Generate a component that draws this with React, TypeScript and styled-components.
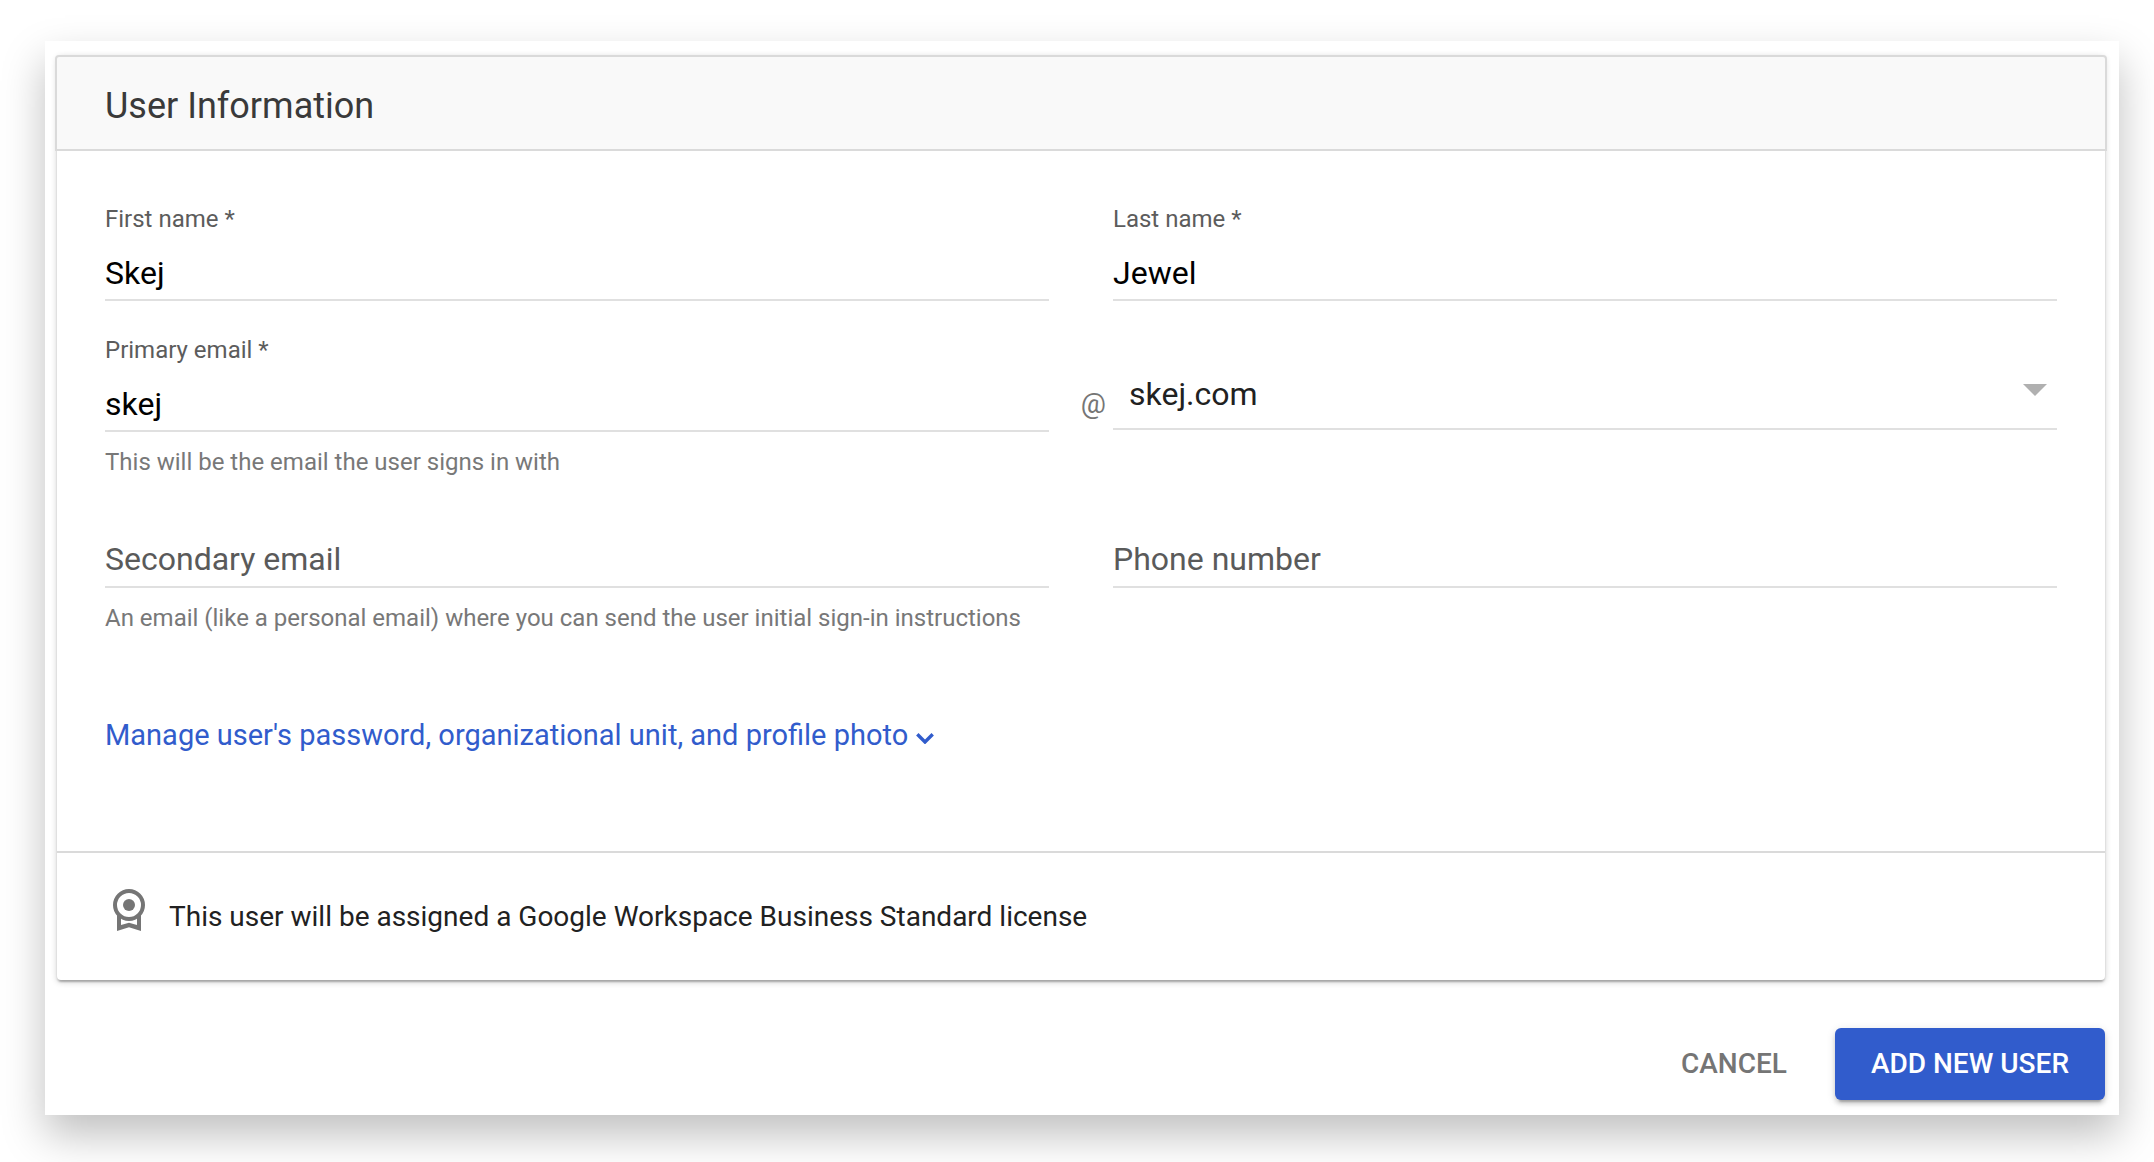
import React, { useState } from "react";
import styled, { createGlobalStyle } from "styled-components";

const GlobalStyle = createGlobalStyle`
  * { box-sizing: border-box; }
  body {
    margin: 0;
    background: #fff;
    font-family: Roboto, "Liberation Sans", sans-serif;
  }
  button, input, select { font-family: inherit; }
`;

const Page = styled.main`
  padding: 41px 35px 47px 45px;
`;

const Dialog = styled.form`
  padding: 16px 14px 15px 12px;
  background: #fff;
  box-shadow: 0 20px 40px rgba(0, 0, 0, 0.25);
`;

const Card = styled.section`
  border-radius: 4px;
  background: #fff;
  box-shadow:
    0 2px 2px rgba(0, 0, 0, 0.14),
    0 4px 2px -2px rgba(0, 0, 0, 0.12),
    0 2px 6px rgba(0, 0, 0, 0.2);
`;

const CardHeader = styled.header`
  margin: -2px -2px 0;
  padding: 29px 48px 23px;
  border: 2px solid #dadada;
  border-radius: 4px 4px 0 0;
  background: #f9f9f9;
`;

const Title = styled.h1`
  margin: 0;
  font-size: 36px;
  line-height: 40px;
  font-weight: 400;
  color: #3a3a3a;
`;

const CardBody = styled.div`
  padding: 54px 48px 100px;
`;

const Row = styled.div<{ $gap: number }>`
  display: grid;
  grid-template-columns: minmax(0, 1fr) 64px minmax(0, 1fr);
  margin-bottom: ${(p) => p.$gap}px;
`;

const Field = styled.div<{ $end?: boolean }>`
  grid-column: ${(p) => (p.$end ? 3 : 1)};
`;

const Label = styled.label`
  display: block;
  font-size: 24px;
  line-height: 28px;
  color: #5c5c5c;
`;

const Input = styled.input`
  display: block;
  width: 100%;
  height: 68px;
  padding: 20px 0 6px;
  border: 0;
  border-bottom: 2px solid #e0e0e0;
  border-radius: 0;
  outline: 0;
  background: transparent;
  font-size: 32px;
  line-height: 40px;
  color: #000;
`;

const Stack = styled.div`
  display: grid;
  > * { grid-area: 1 / 1; }
`;

const RestingLabel = styled.label`
  padding-top: 19px;
  font-size: 32px;
  line-height: 40px;
  color: #5a5a5a;
`;

const Hint = styled.p`
  margin: 16px 0 0;
  font-size: 24px;
  line-height: 28px;
  color: #787878;
`;

const AtSign = styled.span`
  justify-self: end;
  padding: 52px 7px 0 0;
  font-size: 28px;
  line-height: 32px;
  color: #757575;
`;

const DomainField = styled(Stack)`
  grid-column: 3;
  align-self: start;
  align-items: start;
  padding-top: 38px;
`;

const Select = styled.select`
  width: 100%;
  height: 56px;
  padding: 0 48px 14px 16px;
  border: 0;
  border-bottom: 2px solid #e0e0e0;
  border-radius: 0;
  outline: 0;
  appearance: none;
  background: transparent;
  font-size: 32px;
  color: #212121;
`;

const Arrow = styled.svg`
  justify-self: end;
  margin: 10px 10px 0 0;
  pointer-events: none;
`;

const MoreButton = styled.button`
  display: flex;
  align-items: center;
  gap: 8px;
  margin-top: 87px;
  padding: 0;
  border: 0;
  background: none;
  font-size: 29px;
  line-height: 32px;
  color: #315ccc;
  cursor: pointer;
`;

const Chevron = styled.svg`
  margin-top: 6px;
`;

const License = styled.footer`
  display: flex;
  align-items: flex-start;
  gap: 24px;
  padding: 36px 56px 47px;
  border-top: 2px solid #dadada;
  font-size: 28px;
  line-height: 32px;
  color: #212121;
`;

const LicenseText = styled.span`
  padding-top: 12px;
`;

const Actions = styled.div`
  display: flex;
  justify-content: flex-end;
  gap: 24px;
  padding-top: 48px;
`;

const Button = styled.button<{ $primary?: boolean }>`
  height: 72px;
  padding: 0 ${(p) => (p.$primary ? 36 : 24)}px;
  border: 0;
  border-radius: 6px;
  background: ${(p) => (p.$primary ? "#315ccc" : "transparent")};
  box-shadow: ${(p) =>
    p.$primary
      ? "0 2px 10px rgba(0,0,0,.12), 0 4px 4px rgba(0,0,0,.14), 0 6px 2px -4px rgba(0,0,0,.2)"
      : "none"};
  font-size: 28px;
  line-height: 32px;
  font-weight: 500;
  color: ${(p) => (p.$primary ? "#fff" : "#757575")};
  cursor: pointer;
`;

function TextField({ id, label, initial, end, hint }: {
  id: string; label: string; initial: string; end?: boolean; hint?: string;
}) {
  const [value, setValue] = useState(initial);
  return (
    <Field $end={end}>
      <Label htmlFor={id}>{label}</Label>
      <Input id={id} value={value} onChange={(e) => setValue(e.target.value)} />
      {hint && <Hint>{hint}</Hint>}
    </Field>
  );
}

function OptionalField({ id, label, type, end, hint }: {
  id: string; label: string; type: string; end?: boolean; hint?: string;
}) {
  const [value, setValue] = useState("");
  return (
    <Field $end={end}>
      <Stack>
        <RestingLabel htmlFor={id}>{value ? "" : label}</RestingLabel>
        <Input id={id} type={type} value={value} onChange={(e) => setValue(e.target.value)} />
      </Stack>
      {hint && <Hint>{hint}</Hint>}
    </Field>
  );
}

const LicenseIcon = () => (
  <svg width="32" height="42" viewBox="0 0 32 42" aria-hidden="true">
    <path
      fill="#757575"
      fillRule="evenodd"
      d="M4 24V42L16 38.2L28 42V24ZM8 26V36L16 33.8L24 36V26Z"
    />
    <circle cx="16" cy="16" r="14" fill="#fff" stroke="#757575" strokeWidth="4" />
    <circle cx="16" cy="16" r="6" fill="#757575" />
  </svg>
);

export default function App() {
  return (
    <Page>
      <GlobalStyle />
      <Dialog onSubmit={(e) => e.preventDefault()}>
        <Card>
          <CardHeader>
            <Title>User Information</Title>
          </CardHeader>
          <CardBody>
            <Row $gap={35}>
              <TextField id="first" label="First name *" initial="Skej" />
              <TextField id="last" label="Last name *" initial="Jewel" end />
            </Row>
            <Row $gap={44}>
              <TextField
                id="primary"
                label="Primary email *"
                initial="skej"
                hint="This will be the email the user signs in with"
              />
              <AtSign>@</AtSign>
              <DomainField>
                <Select aria-label="Email domain" defaultValue="skej.com">
                  <option>skej.com</option>
                </Select>
                <Arrow width="24" height="12" viewBox="0 0 24 12" aria-hidden="true">
                  <path d="M0 0H24L12 12Z" fill="#b0b0b0" />
                </Arrow>
              </DomainField>
            </Row>
            <Row $gap={0}>
              <OptionalField
                id="secondary"
                type="email"
                label="Secondary email"
                hint="An email (like a personal email) where you can send the user initial sign-in instructions"
              />
              <OptionalField id="phone" type="tel" label="Phone number" end />
            </Row>
            <MoreButton type="button">
              Manage user's password, organizational unit, and profile photo
              <Chevron width="18" height="11" viewBox="0 0 18 11" aria-hidden="true">
                <path d="M1.3 1.3L9 9L16.7 1.3" fill="none" stroke="#315ccc" strokeWidth="3.4" />
              </Chevron>
            </MoreButton>
          </CardBody>
          <License>
            <LicenseIcon />
            <LicenseText>
              This user will be assigned a Google Workspace Business Standard license
            </LicenseText>
          </License>
        </Card>
        <Actions>
          <Button type="button">CANCEL</Button>
          <Button type="submit" $primary>ADD NEW USER</Button>
        </Actions>
      </Dialog>
    </Page>
  );
}
